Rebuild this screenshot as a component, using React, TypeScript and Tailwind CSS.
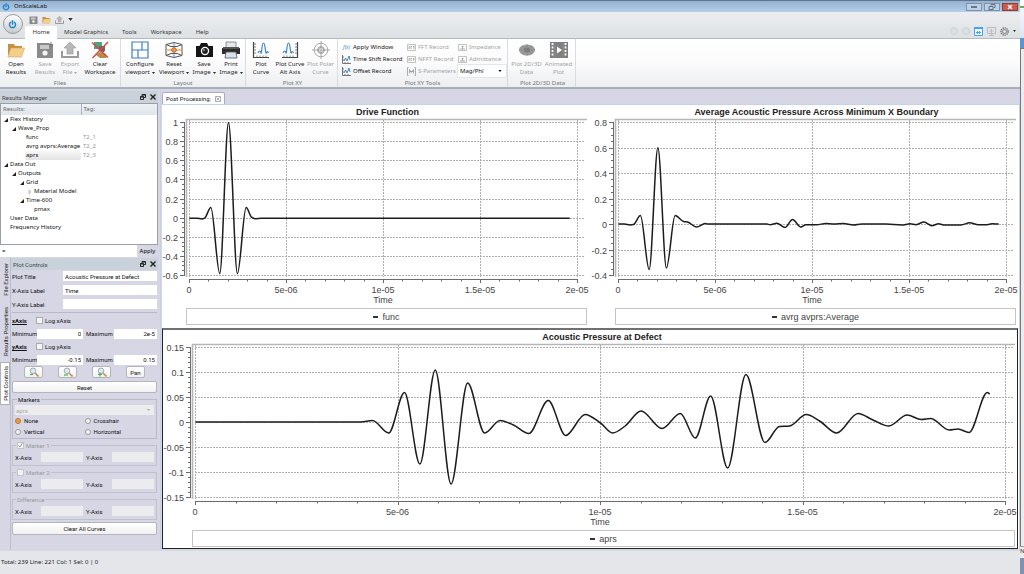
import { useState } from 'react';
import type { ReactNode } from 'react';
import clsx from 'clsx';

type Point = [number, number];

/* ---------- data ---------- */

// x in microseconds
const driveCurve: Point[] = [
  [0, 0], [0.38, 0], [0.64, -0.008], [0.78, 0], [1.1, 0.11], [1.56, -0.58], [2.01, 1], [2.47, -0.58],
  [2.92, 0.11], [3.2, 0.01], [3.38, -0.006], [3.7, 0], [19.6, 0],
];

const averageCurve: Point[] = [
  [0, 0.004], [0.3, 0.004], [0.6, -0.003], [0.77, 0], [1.13, 0.07], [1.58, -0.353], [2.03, 0.602], [2.47, -0.342],
  [2.92, 0.07], [3.35, 0.024], [3.56, 0.02], [4.02, -0.02], [4.47, 0.007], [4.64, 0.003], [7.65, 0.003],
  [7.82, -0.001], [8.16, 0.01], [8.59, -0.023], [8.97, 0.04], [9.4, -0.02], [9.66, -0.002], [10.2, -0.002],
  [10.7, 0.008], [11.1, 0.003], [11.6, 0.007], [12.1, -0.004], [12.54, 0.004], [13.8, 0.003], [14.6, -0.004],
  [15.03, 0.005], [15.34, -0.001], [15.75, 0.02], [16.15, -0.009], [16.5, 0.006], [16.75, -0.003],
  [17.65, -0.003], [18.1, 0.013], [18.55, -0.001], [19, -0.001], [19.25, 0.005], [19.6, 0.004],
];

const defectCurve: Point[] = [
  [0, 0.001], [4.08, 0.001], [4.37, 0.004], [4.77, -0.021], [5.16, 0.06], [5.54, -0.083], [5.92, 0.105],
  [6.31, -0.123], [6.72, 0.079], [7.14, -0.021], [7.52, 0.004], [7.85, -0.005], [8.23, -0.022], [8.71, 0.044],
  [9.14, -0.026], [9.62, 0.016], [10, -0.001], [10.3, -0.021], [10.61, -0.007], [11, 0.023], [11.52, -0.012],
  [11.97, 0.018], [12.34, -0.031], [12.72, 0.053], [13.14, -0.091], [13.59, 0.096], [14.06, -0.04],
  [14.42, -0.008], [14.67, -0.007], [15.08, 0.016], [15.41, 0.003], [15.83, -0.021], [16.36, 0.018],
  [16.73, 0.005], [17.12, -0.007], [17.57, 0.015], [17.92, 0.006], [18.15, 0.008], [18.61, -0.015],
  [18.83, -0.013], [19.1, -0.02], [19.55, 0.06], [19.61, 0.057],
];

interface TreeRow {
  label: string;
  level: number;
  state?: 'open' | 'closed';
  tag?: string;
}

const treeRows: TreeRow[] = [
  { label: 'Flex History', level: 0, state: 'open' },
  { label: 'Wave_Prop', level: 1, state: 'open' },
  { label: 'func', level: 2, tag: 'T2_1' },
  { label: 'avrg avprs:Average', level: 2, tag: 'T2_2' },
  { label: 'aprs', level: 2, tag: 'T2_3' },
  { label: 'Data Out', level: 0, state: 'open' },
  { label: 'Outputs', level: 1, state: 'open' },
  { label: 'Grid', level: 2, state: 'open' },
  { label: 'Material Model', level: 3, state: 'closed' },
  { label: 'Time-600', level: 2, state: 'open' },
  { label: 'pmax', level: 3 },
  { label: 'User Data', level: 0 },
  { label: 'Frequency History', level: 0 },
];

/* ---------- charts ---------- */

// Monotone cubic interpolation, so peaks stay where the samples are
function smoothPath(pts: Point[]) {
  const n = pts.length;
  const slope = pts.slice(1).map((p, i) => (p[1] - pts[i][1]) / (p[0] - pts[i][0]));
  const tangent = pts.map((_, i) => {
    if (i === 0) return slope[0];
    if (i === n - 1) return slope[n - 2];
    const a = slope[i - 1];
    const b = slope[i];
    return a * b <= 0 ? 0 : (2 * a * b) / (a + b);
  });
  let d = `M${pts[0][0]} ${pts[0][1]}`;
  for (let i = 1; i < n; i++) {
    const [ax, ay] = pts[i - 1];
    const [bx, by] = pts[i];
    const h = (bx - ax) / 3;
    d += `C${ax + h} ${ay + tangent[i - 1] * h} ${bx - h} ${by - tangent[i] * h} ${bx} ${by}`;
  }
  return d;
}

interface PlotProps {
  title: string;
  legend: string;
  curve: Point[];
  width: number;
  left: number;
  right: number;
  bottom: number;
  ticks: number[];
  minor: number;
}

function Plot({ title, legend, curve, width, left, right, bottom, ticks, minor }: PlotProps) {
  const top = 4;
  const max = ticks[0];
  const min = ticks[ticks.length - 1];
  const px = (t: number) => left + (t / 20) * (right - left);
  const py = (v: number) => top + ((max - v) / (max - min)) * (bottom - top);
  const axisY = bottom + 5;
  const xLabels = ['0', '5e-06', '1e-05', '1.5e-05', '2e-05'];
  const yMinorCount = (ticks.length - 1) * minor;

  return (
    <figure className="flex flex-col">
      <figcaption className="flex h-[13px] items-center justify-center pl-6 text-[9px] font-bold leading-3 text-[#222]">
        {title}
      </figcaption>
      <svg
        viewBox={`0 0 ${width} ${bottom + 33}`}
        className="w-full text-[9px]"
        fill="none"
        stroke="#6b6b6b"
        role="img"
        aria-label={title}
      >
        <path d={`M${left - 2.5} ${bottom + 2}V1.500H${width - 2}`} stroke="#b6b6b6" strokeWidth="1.600" />
        <g stroke="#b0b0b0" strokeDasharray="2 1">
          {ticks.map((v) => (
            <path key={v} d={`M${left} ${Math.round(py(v)) + 0.5}H${width - 4}`} />
          ))}
          {xLabels.map((l, i) => (
            <path key={l} d={`M${Math.round(px(i * 5)) + 0.5} 2V${bottom + 2}`} />
          ))}
        </g>

        <path d={`M${left - 4.5} ${top}V${bottom + 1}`} />
        {ticks.map((v) => (
          <path key={v} d={`M${left - 9} ${Math.round(py(v)) + 0.5}h5`} />
        ))}
        {Array.from({ length: yMinorCount }).map((_, i) => (
          <path key={i} d={`M${left - 7} ${Math.round(top + (i / yMinorCount) * (bottom - top)) + 0.5}h3`} />
        ))}

        <path d={`M${left} ${axisY - 0.5}H${right + 1}`} />
        {Array.from({ length: 21 }).map((_, i) => (
          <path key={i} d={`M${Math.round(px(i)) + 0.5} ${axisY}v${i % 5 === 0 ? 3 : 1.5}`} />
        ))}

        <g fill="#444" stroke="none">
          {ticks.map((v) => (
            <text key={v} x={left - 11} y={py(v) + 4} textAnchor="end">
              {v}
            </text>
          ))}
          {xLabels.map((l, i) => (
            <text key={l} x={px(i * 5)} y={bottom + 18} textAnchor="middle">
              {l}
            </text>
          ))}
          <text x={(left + right) / 2} y={bottom + 28} textAnchor="middle">
            Time
          </text>
        </g>
        <path
          d={smoothPath(curve.map(([t, v]) => [px(t) + 0.5, py(v) + 0.5]))}
          stroke="#1c1c1c"
          strokeWidth="1.500"
          strokeLinejoin="round"
        />
      </svg>
      <div
        className="mr-0.5 flex h-[17px] items-center justify-center gap-1 border border-[#c4c4c4] text-[9px] leading-3 text-[#444]"
        style={{ marginLeft: left - 3 }}
      >
        <span className="h-0.5 w-[5px] bg-[#333]" />
        {legend}
      </div>
    </figure>
  );
}

/* ---------- icons ---------- */

function PowerIcon({ className }: { className?: string }) {
  return (
    <svg viewBox="0 0 16 16" className={className} fill="none" stroke="#1b84c6" strokeWidth="2.6" strokeLinecap="round">
      <path d="M4.5 4a5.4 5.4 0 1 0 7 0M8 1.5v6" />
    </svg>
  );
}

function FolderIcon({ className }: { className?: string }) {
  return (
    <svg viewBox="0 0 18 16" className={className}>
      <path d="M1 2h6l1 2h7v3H4L1 14z" fill="#c98f3f" />
      <path d="M4 6h13.500l-3 9H1z" fill="#f2cf8c" stroke="#d6a45a" strokeWidth=".6" />
    </svg>
  );
}

function DiskIcon({ className }: { className?: string }) {
  return (
    <svg viewBox="0 0 16 16" className={className}>
      <path d="M0 1h12.500v1.500H16V16H0z" fill="#8a8a8a" />
      <path d="M3 3h9v4H3z" fill="#c9c9c9" />
      <path d="M14 0v5M11.500 2.500h5" stroke="#777" strokeWidth="1" />
      <circle cx="8" cy="11" r="2.600" fill="#f2f2f2" />
    </svg>
  );
}

function ExportIcon({ className }: { className?: string }) {
  return (
    <svg viewBox="0 0 18 16" className={className}>
      <path d="M1 9v6h16V9" fill="none" stroke="#9a9a9a" strokeWidth="2" />
      <path d="M9 0l6 6h-3v6H6V6H3z" fill="#b8b8b8" stroke="#959595" strokeWidth=".6" />
    </svg>
  );
}

function ClearIcon() {
  return (
    <svg viewBox="0 0 18 18" className="h-[18px] w-[18px]">
      <path d="M3 1h8v7H3z" fill="#4fa37e" />
      <path d="M8 5h6v5l-3 2-3-3z" fill="#666" />
      <path d="M5 14l4-3 6 2v4H9z" fill="#b58b4a" />
      <path d="M1 1.500l16 15M17 1L1.500 17" stroke="#d8473f" strokeWidth="1.500" />
    </svg>
  );
}

function ViewportIcon() {
  return (
    <svg viewBox="0 0 18 18" className="h-[18px] w-[18px]" fill="none" stroke="#3f7fbf" strokeWidth="1.200">
      <path d="M1 1h16v16H1zM1 9h16M11 1v8M7 9v8" />
    </svg>
  );
}

function ResetViewIcon() {
  return (
    <svg viewBox="0 0 18 18" className="h-[18px] w-[18px]" fill="none">
      <path d="M1 3.500l8-2 8 2v11l-8 2-8-2zM1 3.500l5 2h6l5-2M1 14.500l5-2h6l5 2" stroke="#555" />
      <path d="M1 9h16" stroke="#e2a33c" strokeWidth="1.200" />
      <path d="M9 2v14" stroke="#4a90d0" />
      <circle cx="9" cy="9" r="2.300" fill="#f0a23c" stroke="#c2573b" />
    </svg>
  );
}

function CameraIcon() {
  return (
    <svg viewBox="0 0 18 18" className="h-[18px] w-[18px]">
      <path d="M6 2h6l1.500 3H18v11H1V5h3.500z" fill="#151515" />
      <circle cx="10" cy="10" r="4.200" fill="#fff" />
      <circle cx="10" cy="10" r="2.900" fill="#222" />
      <circle cx="9" cy="9" r="1" fill="#999" />
    </svg>
  );
}

function PrinterIcon() {
  return (
    <svg viewBox="0 0 18 18" className="h-[18px] w-[18px]">
      <path d="M4 1h10v6H4z" fill="#e8e8e8" stroke="#777" strokeWidth=".8" />
      <path d="M0 7h18v6H0z" fill="#2b2b2b" />
      <path d="M1 6h16v2H1z" fill="#555" />
      <path d="M4 11h10l1 6H3z" fill="#d8e2ee" stroke="#555" strokeWidth=".8" />
    </svg>
  );
}

function CurveIcon({ alt }: { alt?: boolean }) {
  return (
    <svg viewBox="0 0 18 18" className="h-[18px] w-[18px]" fill="none">
      <path d={alt ? 'M1 16.500h15.500V1' : 'M1.500 1v15.500H17'} stroke="#444" strokeWidth="1.200" />
      <path
        d={alt ? 'M14 3h2M14 6h2M14 9h2M14 12h2M3 14.500v2M6 14.500v2M9 14.500v2M12 14.500v2' : 'M2 3h2M2 6h2M2 9h2M2 12h2M5 14.500v2M8 14.500v2M11 14.500v2M14 14.500v2'}
        stroke="#666"
        strokeWidth=".8"
      />
      <path
        d={alt ? 'M2 12q2-4 3 0C6 13 5.500 2 7.500 2s1.500 11 3 10q1-3 2 0' : 'M6 12q2-4 3 0C10 13 9.500 2 11.500 2s1.500 11 3 10q1-3 2 0'}
        stroke="#3f86c4"
        strokeWidth="1.200"
      />
    </svg>
  );
}

function PolarIcon() {
  return (
    <svg viewBox="0 0 18 18" className="h-[18px] w-[18px]" fill="none" stroke="#a8a8a8">
      <circle cx="9" cy="9" r="6.800" />
      <circle cx="9" cy="9" r="3.500" />
      <path d="M0 9h18M9 0v18" />
      <path d="M6 9q3-6 6 0-3 6-6 0" stroke="#999" />
    </svg>
  );
}

function MeshIcon() {
  return (
    <svg viewBox="0 0 18 18" className="h-[18px] w-[18px]">
      <ellipse cx="9" cy="9" rx="8" ry="5.600" fill="#9a9a9a" />
      <path d="M1 9h16M9 3v12M4 5l10 8M14 5L4 13" stroke="#858585" strokeWidth=".6" />
      <ellipse cx="9" cy="9" rx="3" ry="2.400" fill="#7d7d7d" />
    </svg>
  );
}

function FilmIcon() {
  return (
    <svg viewBox="0 0 18 18" className="h-[18px] w-[18px]">
      <path d="M0 1h18v16H0z" fill="#7f7f7f" />
      <path d="M2.500 2v14M15.500 2v14" stroke="#fff" strokeWidth="1.800" strokeDasharray="2 1.500" />
      <path d="M5 2v14M13 2v14" stroke="#999" strokeWidth=".6" />
      <path d="M7 5.500l5 3.500-5 3.500z" fill="#fff" />
    </svg>
  );
}

function MiniPlotIcon() {
  return (
    <svg viewBox="0 0 9 9" className="h-[9px] w-[9px] shrink-0" fill="none">
      <path d="M.5 0v8.500H9M.5 2h1.500M.5 5h1.500M3 8V7M6 8V7" stroke="#555" strokeWidth=".8" />
      <path d="M2 6l1.500-3 1.500 3 2-5 1 4" stroke="#3f86c4" />
    </svg>
  );
}

function MiniBoxIcon({ kind }: { kind: 'fft' | 's' | 'z' }) {
  return (
    <svg viewBox="0 0 9 9" className="h-[9px] w-[9px] shrink-0" fill="none" stroke="#b4b4b4" strokeWidth=".8">
      {kind === 's' ? (
        <path d="M1.500.500H.5v8h1M7.500.500h1v8h-1M2.500 6.500v-4l2 3 2-3v4M2 4.500h5" stroke="#999" />
      ) : (
        <path d="M.5 1.500h8v6h-8z" />
      )}
      {kind === 'fft' && <path d="M2 6V3.500h1M4 6V3.500h1M6 3.500h1.500M6.800 3.500V6" stroke="#999" />}
      {kind === 'z' && <path d="M2 6h5M4.500 6V3M3.500 4l1-1 1 1" stroke="#999" />}
    </svg>
  );
}

function ZoomIcon({ mark }: { mark: string }) {
  return (
    <svg viewBox="0 0 10 10" className="h-[10px] w-[10px]" fill="none">
      <path d="M6 6l3.500 3.500" stroke="#c9924e" strokeWidth="1.600" />
      <circle cx="4" cy="3.800" r="2.800" fill="#dfe9ee" stroke="#8f9ca3" strokeWidth=".8" />
      <path d={mark} stroke="#4caf50" strokeWidth="1.200" />
    </svg>
  );
}

function Caret({ className }: { className?: string }) {
  return (
    <svg viewBox="0 0 6 4" className={clsx('shrink-0', className)}>
      <path d="M0 0h6L3 4z" fill="currentColor" />
    </svg>
  );
}

/* ---------- ribbon ---------- */

interface BigButtonProps {
  icon: ReactNode;
  lines: [string, string];
  className: string;
  disabled?: boolean;
  menu?: boolean;
}

function BigButton({ icon, lines, className, disabled, menu }: BigButtonProps) {
  return (
    <button
      disabled={disabled}
      className={clsx('flex flex-col items-center whitespace-nowrap', disabled ? 'text-[#a3a3a3]' : 'text-[#222]', className)}
    >
      <span className="flex h-[18px] items-center">{icon}</span>
      <span className="mt-px">{lines[0]}</span>
      <span className="flex items-end gap-0.5">
        {lines[1]}
        {menu && <Caret className="mb-0.5 h-[2px] w-[3px]" />}
      </span>
    </button>
  );
}

function RibbonGroup({ label, className, children }: { label: string; className: string; children: ReactNode }) {
  return (
    <section className={clsx('flex shrink-0 flex-col border-r border-[#d9dce0] pt-0.5', className)} aria-label={label}>
      <div className="flex h-9 flex-1">{children}</div>
      <div className="text-center text-[#6f7680]">{label}</div>
    </section>
  );
}

function ToolButton({ icon, label, disabled }: { icon: ReactNode; label: string; disabled?: boolean }) {
  return (
    <button
      disabled={disabled}
      className={clsx('flex h-3 items-center gap-0.5 whitespace-nowrap', disabled ? 'text-[#a3a3a3]' : 'text-[#111]')}
    >
      {icon}
      {label}
    </button>
  );
}

function Ribbon() {
  return (
    <div className="flex h-[50px] border-b-2 border-[#a9afb8] bg-linear-to-b from-white via-[#fbfbfc] to-[#eceef0] leading-2">
      <RibbonGroup label="Files" className="w-[121px]">
        <BigButton icon={<FolderIcon className="h-4 w-[18px]" />} lines={['Open', 'Results']} className="w-8" />
        <BigButton icon={<DiskIcon className="h-4 w-4" />} lines={['Save', 'Results']} className="w-[26px]" disabled />
        <BigButton icon={<ExportIcon className="h-4 w-[18px]" />} lines={['Export', 'File']} className="w-6" disabled menu />
        <BigButton icon={<ClearIcon />} lines={['Clear', 'Workspace']} className="w-9" />
      </RibbonGroup>
      <RibbonGroup label="Layout" className="w-[125px]">
        <BigButton icon={<ViewportIcon />} lines={['Configure', 'viewport']} className="w-[38px]" menu />
        <BigButton icon={<ResetViewIcon />} lines={['Reset', 'Viewport']} className="w-[30px]" menu />
        <BigButton icon={<CameraIcon />} lines={['Save', 'Image']} className="w-[30px]" menu />
        <BigButton icon={<PrinterIcon />} lines={['Print', 'Image']} className="w-6" menu />
      </RibbonGroup>
      <RibbonGroup label="Plot XY" className="w-[92px] pl-0.5">
        <BigButton icon={<CurveIcon />} lines={['Plot', 'Curve']} className="w-[26px]" />
        <BigButton icon={<CurveIcon alt />} lines={['Plot Curve', 'Alt Axis']} className="w-[32px]" />
        <BigButton icon={<PolarIcon />} lines={['Plot Polar', 'Curve']} className="w-[29px]" disabled />
      </RibbonGroup>
      <RibbonGroup label="Plot XY Tools" className="w-[170px]">
        <div className="grid w-full grid-cols-[65px_51px_48px] pl-1">
          <div className="flex flex-col items-start">
            <ToolButton
              icon={<span className="w-[9px] text-center text-[5px] italic text-[#3f86c4]">f(x)</span>}
              label="Apply Window"
            />
            <ToolButton icon={<MiniPlotIcon />} label="Time Shift Record" />
            <ToolButton icon={<MiniPlotIcon />} label="Offset Record" />
          </div>
          <div className="flex flex-col items-start">
            <ToolButton icon={<MiniBoxIcon kind="fft" />} label="FFT Record" disabled />
            <ToolButton icon={<MiniBoxIcon kind="fft" />} label="NFFT Record" disabled />
            <ToolButton icon={<MiniBoxIcon kind="s" />} label="S-Parameters" disabled />
          </div>
          <div className="flex flex-col items-start">
            <ToolButton icon={<MiniBoxIcon kind="z" />} label="Impedance" disabled />
            <ToolButton icon={<MiniBoxIcon kind="z" />} label="Admittance" disabled />
            <div className="flex h-3 w-full items-center bg-white pr-1 ring-1 ring-[#e4e6e8]">
              <select aria-label="Plot format" className="flex-1 appearance-none bg-transparent pl-0.5 text-[#111]">
                <option>Mag/Phi</option>
              </select>
              <Caret className="h-[2px] w-[4px]" />
            </div>
          </div>
        </div>
      </RibbonGroup>
      <RibbonGroup label="Plot 2D/3D Data" className="w-[68px] pl-0.5">
        <BigButton icon={<MeshIcon />} lines={['Plot 2D/3D', 'Data']} className="w-[33px]" disabled />
        <BigButton icon={<FilmIcon />} lines={['Animated', 'Plot']} className="w-[31px]" disabled />
      </RibbonGroup>
    </div>
  );
}

function TitleBar() {
  return (
    <div className="flex h-3 items-center border-t border-[#5f7689] bg-linear-to-b from-[#94b1d0] to-[#b6cfe9] pl-0.5 pr-0.5">
      <PowerIcon className="h-2 w-2" />
      <h1 className="ml-1 flex-1 text-[#111]">OnScaleLab</h1>
      <div className="flex gap-0.5">
        <button aria-label="Minimize" className="flex h-2 w-4 items-center justify-center border border-[#7d93ab] bg-[#bdd0e5]">
          <span className="h-[2px] w-1.5 border border-[#68788a] bg-white" />
        </button>
        <button aria-label="Restore" className="flex h-2 w-4 items-center justify-center border border-[#7d93ab] bg-[#bdd0e5]">
          <svg viewBox="0 0 8 6" className="h-1.5 w-2" fill="none" stroke="#5d6b7a">
            <path d="M3 1.500V.5h4v3H6M1 2.500h4v3H1z" />
          </svg>
        </button>
        <button aria-label="Close" className="flex h-2 w-4 items-center justify-center border border-[#8c3f36] bg-[#cf5a49]">
          <svg viewBox="0 0 6 6" className="h-1.5 w-1.5" stroke="#fff" strokeWidth="1.400">
            <path d="M1 1l4 4M5 1L1 5" />
          </svg>
        </button>
      </div>
    </div>
  );
}

const ribbonTabs = ['Home', 'Model Graphics', 'Tools', 'Workspace', 'Help'];

function RibbonHeader() {
  return (
    <div className="flex h-[27px] bg-linear-to-b from-[#ecedf0] to-[#dde1e3]">
      <div className="flex w-[25px] items-start justify-center border-b border-[#b5babf] pt-0.5">
        <button
          aria-label="Application menu"
          className="flex h-5 w-5 items-center justify-center rounded-full border border-[#999] bg-linear-to-b from-white to-[#c8cbce]"
        >
          <PowerIcon className="h-[9px] w-[9px]" />
        </button>
      </div>
      <div className="flex flex-1 flex-col">
        <div className="flex h-3.5 items-center gap-1 pl-1 pt-px">
          <button aria-label="Save"><DiskIcon className="h-2 w-[9px]" /></button>
          <button aria-label="Open"><FolderIcon className="h-2 w-[9px]" /></button>
          <button aria-label="Export"><ExportIcon className="h-2 w-[9px]" /></button>
          <button aria-label="Customize" className="text-[#333]"><Caret className="h-[3px] w-[5px]" /></button>
        </div>
        <nav className="flex flex-1 items-stretch text-[#333]">
          {ribbonTabs.map((tab) => (
            <button
              key={tab}
              className={clsx(
                'border-b leading-3',
                tab === 'Home' ? 'w-8 rounded-t-xs border-white bg-white' : 'border-[#b5babf] px-[7px]'
              )}
            >
              {tab}
            </button>
          ))}
          <div className="flex flex-1 items-center justify-end gap-1 border-b border-[#b5babf] pb-0.5 pr-1">
            <span className="h-2 w-2 rounded-full border border-[#cfd2d4] bg-[#dcdfe1]" />
            <span className="h-2 w-2 rounded-full border border-[#cfd2d4] bg-[#dcdfe1]" />
            <svg viewBox="0 0 9 9" className="h-[9px] w-[9px]" fill="none" stroke="#4aa3ea">
              <path d="M.5.500h8v8h-8z" fill="#eef7ff" />
              <path d="M0 1h9" strokeWidth="2" />
              <path d="M2 5.500h5M3.500 4v3M5.500 4v3" />
            </svg>
            <svg viewBox="0 0 9 9" className="h-[9px] w-[9px]" fill="none" stroke="#b9bdc0">
              <path d="M.5.500h8v6h-8zM4.500 2v6M2.500 4h4M2 8.500h5" />
            </svg>
            <svg viewBox="0 0 10 10" className="h-[9px] w-[9px]" fill="none" stroke="#777">
              <circle cx="5" cy="5" r="4" strokeDasharray="1.500 .8" strokeWidth="1.600" />
              <circle cx="5" cy="5" r="2.200" />
            </svg>
            <Caret className="h-[2px] w-[3px]" />
          </div>
        </nav>
      </div>
    </div>
  );
}

/* ---------- docks ---------- */

function DockHeader({ title }: { title: string }) {
  return (
    <header className="flex h-3 items-center gap-1 bg-[#c9d1da] pl-0.5 pr-0.5 font-['Roboto',sans-serif] text-[#444]">
      <h2 className="flex-1">{title}</h2>
      <button aria-label={`Float ${title}`}>
        <svg viewBox="0 0 6 6" className="h-[6px] w-[6px]" fill="none" stroke="#222">
          <path d="M2 2V.5h3.500v3H4M.5 2.500h3v3h-3zM.5 3h3M2 1h3.500" />
        </svg>
      </button>
      <button aria-label={`Close ${title}`}>
        <svg viewBox="0 0 6 6" className="h-[6px] w-[6px]" stroke="#222" strokeWidth="1.400">
          <path d="M.5.500l5 5M5.500.500l-5 5" />
        </svg>
      </button>
    </header>
  );
}

function ResultsManager() {
  const [selected, setSelected] = useState('aprs');

  return (
    <section className="flex flex-col">
      <DockHeader title="Results Manager" />
      <div className="h-[142px] border border-[#9a9fa8] bg-white">
        <table className="w-full table-fixed border-collapse">
          <thead>
            <tr className="h-[11px] bg-linear-to-b from-[#eef1f5] to-[#dfe5eb] text-left text-[#666]">
              <th className="w-[80px] border-r border-[#a9b4bf] pl-0.5 font-normal">Results:</th>
              <th className="pl-0.5 font-normal">Tag:</th>
            </tr>
          </thead>
          <tbody>
            {treeRows.map((row) => (
              <tr key={row.label} className="h-[9px] leading-[9px]" onClick={() => setSelected(row.label)}>
                <td className="p-0" style={{ paddingLeft: row.level * 8 + 1 }}>
                  <div className="flex items-center">
                    <span className="flex w-[7px] shrink-0 justify-center">
                      {row.state === 'open' && (
                        <svg viewBox="0 0 4 4" className="h-1 w-1"><path d="M4 0v4H0z" fill="#222" /></svg>
                      )}
                      {row.state === 'closed' && (
                        <svg viewBox="0 0 4 4" className="h-1 w-1"><path d="M1 0l2 2-2 2z" fill="none" stroke="#999" strokeWidth=".6" /></svg>
                      )}
                    </span>
                    <span
                      className={clsx(
                        'flex-1 whitespace-nowrap pl-px text-[#111]',
                        selected === row.label && 'rounded-xs bg-linear-to-b from-[#f7f7f7] to-[#e3e3e3]'
                      )}
                    >
                      {row.label}
                    </span>
                  </div>
                </td>
                <td className="p-0 pl-0.5 text-[#999]">{row.tag}</td>
              </tr>
            ))}
          </tbody>
        </table>
      </div>
      <div className="flex h-3 items-stretch">
        <input aria-label="Expression" defaultValue="=" className="w-0 flex-1 bg-white pl-0.5" />
        <button className="w-[21px]">Apply</button>
      </div>
    </section>
  );
}

interface FieldProps {
  label: string;
  value?: string;
  labelClass: string;
  align?: 'right';
  disabled?: boolean;
}

function Field({ label, value = '', labelClass, align, disabled }: FieldProps) {
  return (
    <label className="flex min-w-0 flex-1 items-center">
      <span className={clsx('shrink-0 whitespace-nowrap', labelClass)}>{label}</span>
      <input
        defaultValue={value}
        disabled={disabled}
        className={clsx('h-2.5 w-0 flex-1 px-0.5', align === 'right' && 'text-right', disabled ? 'bg-[#ececee]' : 'bg-white')}
      />
    </label>
  );
}

function AxisFields({ name, min, max }: { name: string; min: string; max: string }) {
  return (
    <div>
      <div className="flex h-[13px] items-center">
        <span className="w-6 font-bold underline">{name}</span>
        <label className="flex items-center gap-0.5">
          <input type="checkbox" className="h-[7px] w-[7px] appearance-none border border-[#aaa] bg-[#f4f4f4]" />
          Log {name}
        </label>
      </div>
      <div className="flex h-[13px] items-center gap-[3px]">
        <Field label="Minimum" value={min} labelClass="w-[25px]" align="right" />
        <Field label="Maximum" value={max} labelClass="w-7" align="right" />
      </div>
    </div>
  );
}

function AxisPair() {
  return (
    <div className="flex items-center gap-[3px] pl-0.5 pr-0.5">
      <Field label="X-Axis" labelClass="w-[26px]" disabled />
      <Field label="Y-Axis" labelClass="w-[26px]" disabled />
    </div>
  );
}

function MarkerBox({ label, checkbox, checked }: { label: string; checkbox?: boolean; checked?: boolean }) {
  return (
    <fieldset className="mt-px border border-[#c0c0ce] pb-[3px]">
      <legend className="ml-[3px] flex h-2.5 items-center px-px text-[#999]">
        {checkbox ? (
          <label className="flex items-center gap-0.5">
            <span className="relative flex">
              <input type="checkbox" disabled defaultChecked={checked} className="h-[7px] w-[7px] appearance-none border border-[#c4c4c4] bg-[#f2f2f2]" />
              {checked && (
                <svg viewBox="0 0 7 7" className="absolute inset-0 h-[7px] w-[7px]" fill="none" stroke="#999">
                  <path d="M1.500 3.500L3 5l2.500-4" />
                </svg>
              )}
            </span>
            {label}
          </label>
        ) : (
          label
        )}
      </legend>
      <div className="pt-0.5">
        <AxisPair />
      </div>
    </fieldset>
  );
}

const bevel = 'border border-[#b4b4bc] bg-linear-to-b from-white to-[#f1f1f1] rounded-xs';

function PlotControls() {
  return (
    <section className="flex min-w-0 flex-1 flex-col">
      <DockHeader title="Plot Controls" />
      <div className="flex flex-col pl-px pr-px font-['Roboto',sans-serif] text-[#111]">
        <div className="flex flex-col gap-1 border-b border-[#b9b9c8] pb-[3px] pt-px">
          <Field label="Plot Title" value="Acoustic Pressure at Defect" labelClass="w-[51px]" />
          <Field label="X-Axis Label" value="Time" labelClass="w-[51px]" />
          <Field label="Y-Axis Label" labelClass="w-[51px]" />
        </div>
        <div className="pt-px">
          <AxisFields name="xAxis" min="0" max="2e-5" />
          <AxisFields name="yAxis" min="-0.15" max="0.15" />
        </div>
        <div className="flex justify-between px-3 pb-px">
          <button aria-label="Zoom out" className={clsx('flex h-3 w-[19px] items-center justify-center', bevel)}><ZoomIcon mark="M1 7.500h3" /></button>
          <button aria-label="Zoom fit" className={clsx('flex h-3 w-[19px] items-center justify-center', bevel)}><ZoomIcon mark="M1 8h4" /></button>
          <button aria-label="Zoom in" className={clsx('flex h-3 w-[19px] items-center justify-center', bevel)}><ZoomIcon mark="M1 7.500h4M3 5.500v4" /></button>
          <button className={clsx('h-3 w-[19px]', bevel)}>Pan</button>
        </div>
        <button className={clsx('mt-0.5 h-3', bevel)}>Reset</button>

        <fieldset className="mt-0.5 border border-[#b9b9c8] px-0.5 pb-px">
          <legend className="ml-0.5 px-px">Markers</legend>
          <div className="mt-px flex h-2.5 items-center bg-[#ececee] pr-1 text-[#aaa]">
            <select disabled aria-label="Marker curve" className="flex-1 appearance-none pl-px">
              <option>aprs</option>
            </select>
            <Caret className="h-[2px] w-[3px]" />
          </div>
          <div className="grid grid-cols-2">
            {['None', 'Crosshair', 'Vertical', 'Horizontal'].map((m) => (
              <label key={m} className="flex h-[11px] items-center gap-[3px]">
                <input
                  type="radio"
                  name="marker"
                  defaultChecked={m === 'None'}
                  className="h-[6px] w-[6px] appearance-none rounded-full border border-[#999] bg-[#f4f4f4] checked:border-[#b5783a] checked:bg-[#f09a3a]"
                />
                {m}
              </label>
            ))}
          </div>
        </fieldset>
        <MarkerBox label="Marker 1" checkbox checked />
        <MarkerBox label="Marker 2" checkbox />
        <MarkerBox label="Difference" />
        <button className={clsx('mt-0.5 h-[13px]', bevel)}>Clear All Curves</button>
      </div>
    </section>
  );
}

function SideTabs() {
  const tabs = [
    { label: 'File Explorer', height: 'h-[42px]' },
    { label: 'Results Properties', height: 'h-[62px]' },
    { label: 'Plot Controls', height: 'h-[43px]' },
  ];
  return (
    <nav className="flex w-[11px] shrink-0 flex-col border-r border-[#bcbccb] font-['Roboto',sans-serif] text-[#222]">
      {tabs.map((t) => (
        <button
          key={t.label}
          className={clsx(
            'flex items-center justify-center whitespace-nowrap',
            t.height,
            t.label === 'Plot Controls' && 'border border-[#b0b0be] bg-white'
          )}
        >
          <span className="rotate-180 [writing-mode:vertical-rl]">{t.label}</span>
        </button>
      ))}
    </nav>
  );
}

/* ---------- page ---------- */

const unitTicks = [1, 0.8, 0.6, 0.4, 0.2, 0, -0.2, -0.4, -0.6];
const averageTicks = [0.8, 0.6, 0.4, 0.2, 0, -0.2, -0.4];
const defectTicks = [0.15, 0.1, 0.05, 0, -0.05, -0.1, -0.15];

function PostProcessing() {
  return (
    <main className="flex min-w-0 flex-1 flex-col border-l border-[#c3d0e6] pl-px pt-px">
      <div className="flex h-[13px] border-b border-[#c3d3ee]">
        <button className="flex w-[63px] items-center justify-center gap-1 whitespace-nowrap rounded-t-xs border-x border-t border-[#a9abc0] bg-white font-['Roboto',sans-serif] text-[#222]">
          Post Processing:
          <svg viewBox="0 0 6 6" className="h-[6px] w-[6px]" fill="none" stroke="#999" strokeWidth=".8">
            <path d="M.5.500h5v5h-5zM1.500 1.500l3 3M4.500 1.500l-3 3" />
          </svg>
        </button>
      </div>
      <div className="bg-white pr-px font-['Liberation_Sans',Arial,sans-serif]">
        <div className="grid grid-cols-2 gap-0.5 pb-[3px]">
          <Plot title="Drive Function" legend="func" curve={driveCurve} width={427} left={27} right={415} bottom={157} ticks={unitTicks} minor={4} />
          <Plot title="Average Acoustic Pressure Across Minimum X Boundary" legend="avrg avprs:Average" curve={averageCurve} width={427} left={27} right={415} bottom={157} ticks={averageTicks} minor={4} />
        </div>
        <div className="border border-t-2 border-[#222] border-t-[#707070] pb-px">
          <Plot title="Acoustic Pressure at Defect" legend="aprs" curve={defectCurve} width={854} left={32} right={842} bottom={154} ticks={defectTicks} minor={5} />
        </div>
      </div>
    </main>
  );
}

export default function App() {
  return (
    <div className="flex min-h-screen bg-[#e4e6ea] font-['Noto_Sans','Open_Sans',sans-serif] text-[6px] leading-[9px]">
      <div className="flex min-w-0 flex-1 flex-col">
        <TitleBar />
        <RibbonHeader />
        <Ribbon />
        <div className="flex flex-1 border-r border-[#c3d3ee] bg-[#d6d6e5] pt-0.5">
          <aside className="flex w-[158px] shrink-0 flex-col">
            <ResultsManager />
            <div className="mt-px flex flex-1">
              <SideTabs />
              <PlotControls />
            </div>
          </aside>
          <div className="flex min-w-0 flex-1 pl-0.5">
            <PostProcessing />
          </div>
        </div>
        <footer className="flex h-6 items-center border-t border-[#d4dae4] bg-[#e4e6ea] pl-px text-[#222]">
          Total: 239 Line: 221 Col: 1 Sel: 0 | 0
        </footer>
      </div>

      {/* edge of the window behind */}
      <div className="flex w-1 shrink-0 flex-col overflow-hidden bg-[#ececec]">
        <div className="h-2 border-b-2 border-[#6cb33f] bg-white" />
        <div className="h-[30px] bg-linear-to-b from-[#f5f7fb] to-[#dde4f2]" />
        <div className="h-2.5 bg-[#5b96d4]" />
        <div className="flex-1 border-l border-t border-[#777]" />
        <div className="h-3 border-t border-[#999] text-[#333]">N</div>
        <div className="h-4 bg-[#8193ae]" />
      </div>
    </div>
  );
}
